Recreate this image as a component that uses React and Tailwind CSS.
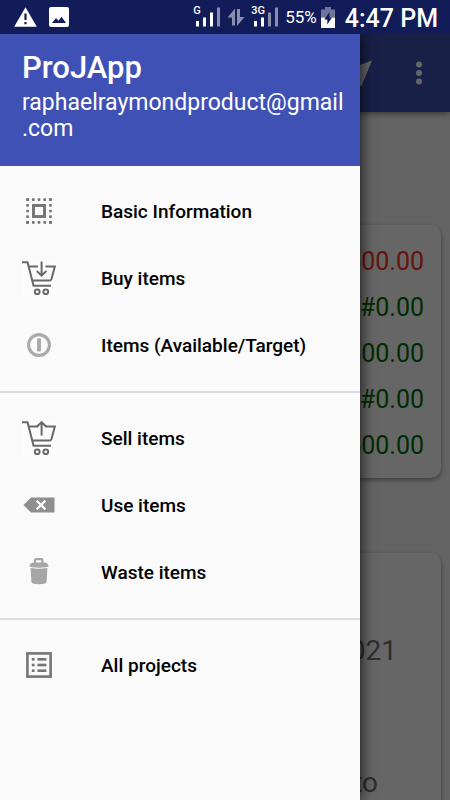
const stroke = { fill: "none", stroke: "currentColor" };

function SelectAllIcon() {
  const dots = [1.5, 7, 12.5, 18, 23.5];
  return (
    <svg className="size-[26px] text-[#757575]" viewBox="0 0 25 25" aria-hidden="true">
      <g fill="currentColor">
        {dots.map((d) => (
          <g key={d}>
            <rect x={d - 1.3} y="0.2" width="2.6" height="2.6" rx="0.6" />
            <rect x={d - 1.3} y="22.2" width="2.6" height="2.6" rx="0.6" />
            <rect x="0.2" y={d - 1.3} width="2.6" height="2.6" rx="0.6" />
            <rect x="22.2" y={d - 1.3} width="2.6" height="2.6" rx="0.6" />
          </g>
        ))}
      </g>
      <rect x="7.2" y="7.2" width="10.6" height="10.6" strokeWidth="2.8" {...stroke} />
    </svg>
  );
}

function CartIcon({ up }) {
  return (
    <svg className="size-[34px] bg-[#fcfcfc] text-[#686868]" viewBox="0 0 34 34" aria-hidden="true">
      <g strokeWidth="2" {...stroke}>
        <path d="M0 1.3H5.5L11.6 24.8H29" />
        <path d="M7 5.6H16M23.5 5.6H32.8L29.5 18Q29 19.4 28 19.4H10.5" />
        <circle cx="15.2" cy="30.8" r="2.4" />
        <circle cx="23.8" cy="30.8" r="2.4" />
        <path d={up ? "M19.6 14.5V1.5M14.8 5.8L19.6 1.2L24.4 5.8" : "M19.6 0.5V14.5M14.8 10L19.6 14.6L24.4 10"} />
      </g>
    </svg>
  );
}

function InfoIcon() {
  return (
    <svg className="size-[26px] text-[#ababab]" viewBox="0 0 26 26" aria-hidden="true">
      <circle cx="13" cy="13" r="10.4" strokeWidth="3.1" {...stroke} />
      <rect x="11" y="6.2" width="4" height="3.6" rx="1.2" fill="currentColor" />
      <rect x="11" y="9" width="4" height="10.6" rx="1" fill="currentColor" />
    </svg>
  );
}

function EraseIcon() {
  return (
    <svg className="h-4 w-8 text-[#8f8f8f]" viewBox="0 0 32 16" aria-hidden="true">
      <path d="M0.5 8L8 0.5H31.5V15.5H8Z" fill="currentColor" />
      <path d="M13.6 3.6L22.4 12.4M22.4 3.6L13.6 12.4" stroke="#fafafa" strokeWidth="2.2" />
    </svg>
  );
}

function TrashIcon() {
  return (
    <svg className="h-[27px] w-5 text-[#a6a6a6]" viewBox="0 0 20 27" aria-hidden="true">
      <path d="M6 5V2Q6 1.2 6.8 1.2H12.6Q13.4 1.2 13.4 2V5" strokeWidth="2.2" {...stroke} />
      <path d="M0.5 8.3Q0.7 4.4 5 4.4H15Q19.3 4.4 19.5 8.3Q19.3 9.6 10 9.8Q0.7 9.6 0.5 8.3Z" fill="currentColor" />
      <path d="M1.6 10Q10 11.4 18.4 10L17.6 24Q17 26.2 10 26.2Q3 26.2 2.4 24Z" fill="currentColor" />
    </svg>
  );
}

function ListIcon() {
  return (
    <svg className="size-[26px] text-[#757575]" viewBox="0 0 26 26" aria-hidden="true">
      <rect x="1.4" y="1.4" width="23.2" height="23.2" strokeWidth="2.6" {...stroke} />
      <g fill="currentColor">
        {[6, 11.7, 17.4].map((y) => (
          <g key={y}>
            <rect x="5.8" y={y} width="2.8" height="2.6" />
            <rect x="11.4" y={y} width="9" height="2.6" />
          </g>
        ))}
      </g>
    </svg>
  );
}

function SignalIcon({ level }) {
  return (
    <svg className="h-5 w-[26px]" viewBox="0 0 26 20" fill="#fff" aria-hidden="true">
      <rect x="1" y="14" width="3" height="5.5" />
      <rect x="8" y="10.5" width="3" height="9" />
      <rect x="15" y="5.5" width="3" height="14" opacity={level > 2 ? 1 : 0.5} />
      <rect x="22" y="0.5" width="3" height="19" opacity="0.5" />
    </svg>
  );
}

function StatusBar() {
  return (
    <header className="flex h-[34px] shrink-0 items-center bg-[#121c58] pr-3 pl-3.5 text-white">
      <svg className="h-5 w-[23px]" viewBox="0 0 23 20" aria-label="Warning">
        <path d="M11.5 0.3L22.8 19.8H0.2Z" fill="#fff" />
        <path d="M11.5 6.5V13M11.5 15V17.3" stroke="#121c58" strokeWidth="2.2" />
      </svg>
      <svg className="ml-3 size-5" viewBox="0 0 20 20" aria-label="Picture">
        <rect width="20" height="20" rx="2" fill="#fff" />
        <path d="M3 16L7 11L9.5 13.8L12.5 9.8L17 16Z" fill="#121c58" />
      </svg>
      <div className="relative ml-auto flex">
        <span className="absolute -top-0.5 -left-0.5 text-[11px] leading-none font-medium">G</span>
        <SignalIcon level={3} />
      </div>
      <svg className="ml-1.5 h-5 w-[18px]" viewBox="0 0 18 20" fill="#fff" opacity="0.5" aria-hidden="true">
        <path d="M8 1.5V18.5H5V10.5H0.5ZM10 19V2H13V10H17.5Z" />
      </svg>
      <div className="relative ml-2 flex">
        <span className="absolute -top-0.5 -left-0.5 text-[11px] leading-none font-medium">3G</span>
        <SignalIcon level={2} />
      </div>
      <span className="ml-1.5 text-[17px] leading-5">55%</span>
      <svg className="ml-1 h-[21px] w-3.5" viewBox="0 0 14 21" aria-label="Battery">
        <path d="M0 2.5H4V0H10V2.5H14V10.5H0Z" fill="#fff" opacity="0.4" />
        <path d="M0 10.5H14V21H0Z" fill="#fff" />
        <path d="M8.5 5L3.2 12.5H6.3V17.5L11 10.5H8.5Z" fill="#121c58" />
      </svg>
      <span className="ml-2.5 pt-1 text-[25px] leading-8 font-medium">4:47 PM</span>
    </header>
  );
}

const amounts = [
  { text: "#500.00", tone: "text-[#ff3020]" },
  { text: "#0.00", tone: "text-[#007000]" },
  { text: "#500.00", tone: "text-[#007000]" },
  { text: "#0.00", tone: "text-[#007000]" },
  { text: "#500.00", tone: "text-[#007000]" },
];

function ProjectPage() {
  return (
    <div className="bg-[#fafafa]">
      <div className="relative flex h-[78px] items-center justify-end bg-[#3f51b5] pr-[18px] shadow-[0_3px_5px_rgba(0,0,0,0.35)]">
        <button type="button" aria-label="Send" className="mr-[34px]">
          <svg className="size-7" viewBox="0 0 28 28" fill="#fff" aria-hidden="true">
            <path d="M28 1.5L17.5 27H16.5L13.5 15.5L1 11.5Z" />
          </svg>
        </button>
        <button type="button" aria-label="More options">
          <svg className="h-6 w-[26px]" viewBox="0 0 26 24" fill="#fff" aria-hidden="true">
            <circle cx="13" cy="3.5" r="3" />
            <circle cx="13" cy="12" r="3" />
            <circle cx="13" cy="20.5" r="3" />
          </svg>
        </button>
      </div>
      <main className="flex flex-col gap-[75px] px-[9px] pt-[113px] text-right">
        <ul className="rounded-[10px] bg-white pt-3.5 pr-[17px] pb-[9px] shadow-[0_2px_5px_rgba(0,0,0,0.4)]">
          {amounts.map((a, i) => (
            <li key={i} className={`text-[25px] leading-[46px] ${a.tone}`}>{a.text}</li>
          ))}
        </ul>
        <section className="rounded-[10px] bg-white pt-20 pb-10 text-[28px] leading-9 text-[#757575] shadow-[0_2px_5px_rgba(0,0,0,0.4)]">
          <p className="pr-11">2021</p>
          <p className="pt-24 pr-[63px]">to</p>
        </section>
      </main>
    </div>
  );
}

const groups = [
  [
    { label: "Basic Information", icon: <SelectAllIcon /> },
    { label: "Buy items", icon: <CartIcon /> },
    { label: "Items (Available/Target)", icon: <InfoIcon /> },
  ],
  [
    { label: "Sell items", icon: <CartIcon up /> },
    { label: "Use items", icon: <EraseIcon /> },
    { label: "Waste items", icon: <TrashIcon /> },
  ],
  [{ label: "All projects", icon: <ListIcon /> }],
];

function Drawer() {
  return (
    <aside className="absolute inset-y-0 left-0 w-4/5 bg-[#fafafa] shadow-[0_0_14px_rgba(0,0,0,0.9)]">
      <div className="h-[132px] bg-[#3f51b5] pt-4 pr-2.5 pl-[22px] text-white">
        <h1 className="text-[31px] leading-9 font-medium">ProJApp</h1>
        <p className="pt-1 text-[23px] leading-[26px]">raphaelraymondproduct@gmail<wbr />.com</p>
      </div>
      <nav className="divide-y-2 divide-[#dcdcdc]">
        {groups.map((items, i) => (
          <ul key={i} className="pt-[11px] pb-[13px]">
            {items.map((item) => (
              <li key={item.label}>
                <a href="#" className="flex h-[67px] items-center text-[19px] font-medium text-black">
                  <span className="ml-[22px] flex w-[34px] justify-center">{item.icon}</span>
                  <span className="ml-[45px] pt-1">{item.label}</span>
                </a>
              </li>
            ))}
          </ul>
        ))}
      </nav>
    </aside>
  );
}

export default function App() {
  return (
    <div className="flex h-screen flex-col overflow-hidden font-[Roboto,sans-serif]">
      <StatusBar />
      <div className="relative flex-1 overflow-hidden bg-[#fafafa]">
        <ProjectPage />
        <div className="absolute inset-0 bg-black/60" />
        <Drawer />
      </div>
    </div>
  );
}
